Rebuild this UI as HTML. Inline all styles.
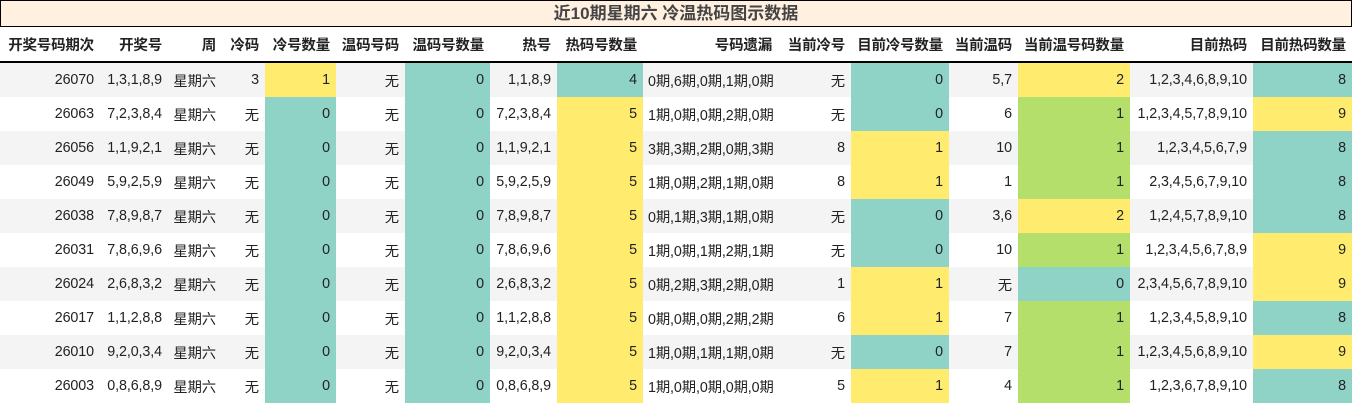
<!DOCTYPE html><html><head><meta charset="utf-8"><style>
body{margin:0;width:1352px;height:404px;overflow:hidden;background:#fff;font-family:"Liberation Sans","Noto Sans CJK SC",sans-serif;}
.t{position:absolute;left:0;top:0;width:1350px;height:25px;border:1px solid #000;background:#fff0e0;text-align:center;font-weight:bold;font-size:17px;line-height:26px;color:#444;}
table{position:absolute;left:0;top:27px;border-collapse:collapse;table-layout:fixed;width:1352px;font-size:14px;color:#222;}
th{height:34px;border-bottom:2px solid #000;text-align:right;padding:0 6px 0 0;font-weight:bold;font-size:14.5px;white-space:nowrap;letter-spacing:-0.2px}
td{height:34px;padding:0 6px 0 0;text-align:right;white-space:nowrap;letter-spacing:-0.1px;font-size:14.3px}
tbody tr:nth-child(odd) td{background:#f4f4f4}
td.l{text-align:left;padding:0 0 0 5px}
tbody tr td.y{background:#ffeb6e}
tbody tr td.g{background:#8fd3c7}
tbody tr td.n{background:#b3df6a}
</style></head><body>
<div class="t">近10期星期六 冷温热码图示数据</div>
<table>
<colgroup><col style="width:100px"><col style="width:68px"><col style="width:54px"><col style="width:43px"><col style="width:71px"><col style="width:69px"><col style="width:85px"><col style="width:67px"><col style="width:86px"><col style="width:135px"><col style="width:73px"><col style="width:98px"><col style="width:69px"><col style="width:112px"><col style="width:123px"><col style="width:99px"></colgroup>
<thead><tr><th>开奖号码期次</th><th>开奖号</th><th>周</th><th>冷码</th><th>冷号数量</th><th>温码号码</th><th>温码号数量</th><th>热号</th><th>热码号数量</th><th>号码遗漏</th><th>当前冷号</th><th>目前冷号数量</th><th>当前温码</th><th>当前温号码数量</th><th>目前热码</th><th>目前热码数量</th></tr></thead>
<tbody>
<tr><td>26070</td><td>1,3,1,8,9</td><td>星期六</td><td>3</td><td class="y">1</td><td>无</td><td class="g">0</td><td>1,1,8,9</td><td class="g">4</td><td class="l">0期,6期,0期,1期,0期</td><td>无</td><td class="g">0</td><td>5,7</td><td class="y">2</td><td>1,2,3,4,6,8,9,10</td><td class="g">8</td></tr>
<tr><td>26063</td><td>7,2,3,8,4</td><td>星期六</td><td>无</td><td class="g">0</td><td>无</td><td class="g">0</td><td>7,2,3,8,4</td><td class="y">5</td><td class="l">1期,0期,0期,2期,0期</td><td>无</td><td class="g">0</td><td>6</td><td class="n">1</td><td>1,2,3,4,5,7,8,9,10</td><td class="y">9</td></tr>
<tr><td>26056</td><td>1,1,9,2,1</td><td>星期六</td><td>无</td><td class="g">0</td><td>无</td><td class="g">0</td><td>1,1,9,2,1</td><td class="y">5</td><td class="l">3期,3期,2期,0期,3期</td><td>8</td><td class="y">1</td><td>10</td><td class="n">1</td><td>1,2,3,4,5,6,7,9</td><td class="g">8</td></tr>
<tr><td>26049</td><td>5,9,2,5,9</td><td>星期六</td><td>无</td><td class="g">0</td><td>无</td><td class="g">0</td><td>5,9,2,5,9</td><td class="y">5</td><td class="l">1期,0期,2期,1期,0期</td><td>8</td><td class="y">1</td><td>1</td><td class="n">1</td><td>2,3,4,5,6,7,9,10</td><td class="g">8</td></tr>
<tr><td>26038</td><td>7,8,9,8,7</td><td>星期六</td><td>无</td><td class="g">0</td><td>无</td><td class="g">0</td><td>7,8,9,8,7</td><td class="y">5</td><td class="l">0期,1期,3期,1期,0期</td><td>无</td><td class="g">0</td><td>3,6</td><td class="y">2</td><td>1,2,4,5,7,8,9,10</td><td class="g">8</td></tr>
<tr><td>26031</td><td>7,8,6,9,6</td><td>星期六</td><td>无</td><td class="g">0</td><td>无</td><td class="g">0</td><td>7,8,6,9,6</td><td class="y">5</td><td class="l">1期,0期,1期,2期,1期</td><td>无</td><td class="g">0</td><td>10</td><td class="n">1</td><td>1,2,3,4,5,6,7,8,9</td><td class="y">9</td></tr>
<tr><td>26024</td><td>2,6,8,3,2</td><td>星期六</td><td>无</td><td class="g">0</td><td>无</td><td class="g">0</td><td>2,6,8,3,2</td><td class="y">5</td><td class="l">0期,2期,3期,2期,0期</td><td>1</td><td class="y">1</td><td>无</td><td class="g">0</td><td>2,3,4,5,6,7,8,9,10</td><td class="y">9</td></tr>
<tr><td>26017</td><td>1,1,2,8,8</td><td>星期六</td><td>无</td><td class="g">0</td><td>无</td><td class="g">0</td><td>1,1,2,8,8</td><td class="y">5</td><td class="l">0期,0期,0期,2期,2期</td><td>6</td><td class="y">1</td><td>7</td><td class="n">1</td><td>1,2,3,4,5,8,9,10</td><td class="g">8</td></tr>
<tr><td>26010</td><td>9,2,0,3,4</td><td>星期六</td><td>无</td><td class="g">0</td><td>无</td><td class="g">0</td><td>9,2,0,3,4</td><td class="y">5</td><td class="l">1期,0期,1期,1期,0期</td><td>无</td><td class="g">0</td><td>7</td><td class="n">1</td><td>1,2,3,4,5,6,8,9,10</td><td class="y">9</td></tr>
<tr><td>26003</td><td>0,8,6,8,9</td><td>星期六</td><td>无</td><td class="g">0</td><td>无</td><td class="g">0</td><td>0,8,6,8,9</td><td class="y">5</td><td class="l">1期,0期,0期,0期,0期</td><td>5</td><td class="y">1</td><td>4</td><td class="n">1</td><td>1,2,3,6,7,8,9,10</td><td class="g">8</td></tr>
</tbody></table>
</body></html>
